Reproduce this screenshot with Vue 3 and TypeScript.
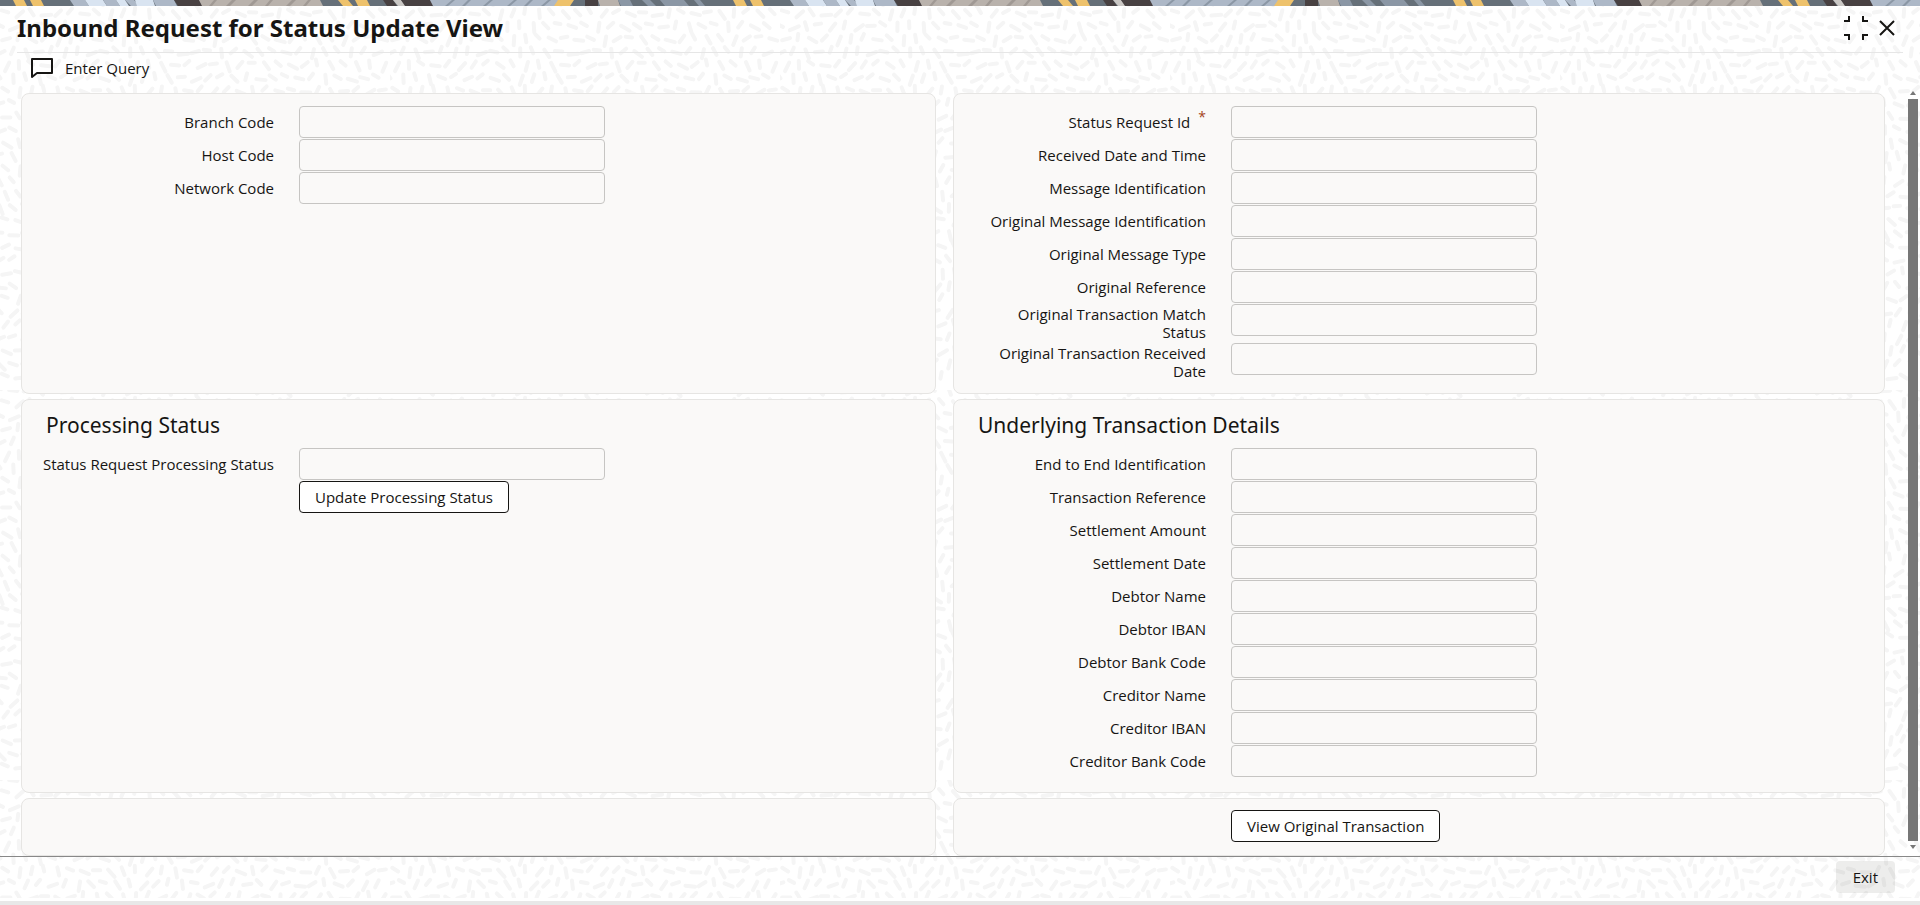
<script setup lang="ts">
interface Field {
  id: string
  label: string
  required?: boolean
}

interface Dash {
  x1: number
  y1: number
  x2: number
  y2: number
}

interface Stripe {
  points: string
  color: string
}

const generalFields: Field[] = [
  { id: 'branchCode', label: 'Branch Code' },
  { id: 'hostCode', label: 'Host Code' },
  { id: 'networkCode', label: 'Network Code' },
]

const requestFields: Field[] = [
  { id: 'statusRequestId', label: 'Status Request Id', required: true },
  { id: 'receivedDateTime', label: 'Received Date and Time' },
  { id: 'messageId', label: 'Message Identification' },
  { id: 'originalMessageId', label: 'Original Message Identification' },
  { id: 'originalMessageType', label: 'Original Message Type' },
  { id: 'originalReference', label: 'Original Reference' },
  { id: 'matchStatus', label: 'Original Transaction Match Status' },
  { id: 'originalReceivedDate', label: 'Original Transaction Received Date' },
]

const transactionFields: Field[] = [
  { id: 'endToEndId', label: 'End to End Identification' },
  { id: 'transactionReference', label: 'Transaction Reference' },
  { id: 'settlementAmount', label: 'Settlement Amount' },
  { id: 'settlementDate', label: 'Settlement Date' },
  { id: 'debtorName', label: 'Debtor Name' },
  { id: 'debtorIban', label: 'Debtor IBAN' },
  { id: 'debtorBankCode', label: 'Debtor Bank Code' },
  { id: 'creditorName', label: 'Creditor Name' },
  { id: 'creditorIban', label: 'Creditor IBAN' },
  { id: 'creditorBankCode', label: 'Creditor Bank Code' },
]

// Short strokes laid along a smooth field that repeats with the tile.
const tile = 390
function buildDashes(): Dash[] {
  const result: Dash[] = []
  const turn = (Math.PI * 2) / tile
  const rowStep = 13
  const colStep = 13
  for (let row = 0; row < tile / rowStep; row++) {
    for (let col = 0; col < tile / colStep; col++) {
      const jitter = ((row * 37 + col * 61) % 17) / 17 - 0.5
      const x = col * colStep + (row % 2) * 6 + jitter * 3
      const y = row * rowStep + jitter * 5
      const angle =
        1.5 * Math.sin(x * turn * 3 + Math.cos(y * turn) * 2) +
        1.3 * Math.cos(y * turn * 2 + Math.sin(x * turn) * 2) +
        1.3 +
        jitter * 0.6
      const half = 4 + jitter * 2
      const dx = Math.cos(angle) * half
      const dy = Math.sin(angle) * half
      result.push({ x1: x - dx, y1: y - dy, x2: x + dx, y2: y + dy })
    }
  }
  return result
}
const dashes = buildDashes()

const slate = '#667079'
const mist = '#8b97a5'
const gold = '#eec26c'
const sky = '#d9e4f1'
const steel = '#adb8c7'
const dark = '#484142'
const taupe = '#b9b2ac'
const shade = '#a09994'

function stripe(from: number, to: number, slant: number, color: string): Stripe {
  return { points: `${from},0 ${to},0 ${to + slant},6 ${from + slant},6`, color }
}
const stripes: Stripe[] = [
  stripe(13, 24, 3, gold),
  stripe(30, 41, 3, gold),
  stripe(70, 85, 4, steel),
  stripe(85, 103, 4, sky),
  stripe(103, 116, 4, steel),
  stripe(116, 125, 4, sky),
  stripe(125, 134, 6, steel),
  stripe(135, 153, 2, sky),
  stripe(153, 174, 3, steel),
  stripe(174, 199, 4, dark),
  stripe(199, 320, 3, taupe),
  stripe(214, 217, -5, shade),
  stripe(232, 236, -6, shade),
  stripe(254, 258, -6, shade),
  stripe(270, 273, -5, shade),
  stripe(292, 296, -6, shade),
  stripe(308, 311, -5, shade),
  stripe(338, 348, 5, gold),
  stripe(355, 367, 3, gold),
  stripe(383, 393, 4, dark),
  stripe(393, 401, 5, '#cbc8c5'),
  stripe(401, 430, 4, dark),
  stripe(430, 558, 3, steel),
  stripe(452, 455, -7, mist),
  stripe(468, 471, -6, mist),
  stripe(490, 493, -7, mist),
  stripe(514, 517, -7, mist),
  stripe(530, 533, -6, mist),
  stripe(548, 551, -7, mist),
  stripe(558, 574, -4, gold),
  stripe(585, 598, 0, dark),
  stripe(598, 618, 2, taupe),
  stripe(618, 630, 3, mist),
  stripe(642, 650, 6, mist),
  stripe(660, 684, 5, mist),
  stripe(694, 700, 5, mist),
]
</script>

<template>
  <div class="screen">
    <svg class="backdrop" aria-hidden="true">
      <defs>
        <pattern id="dashes" :width="tile" :height="tile" patternUnits="userSpaceOnUse">
          <line v-for="(d, i) in dashes" :key="i" :x1="d.x1" :y1="d.y1" :x2="d.x2" :y2="d.y2" />
        </pattern>
      </defs>
      <rect width="100%" height="100%" fill="url(#dashes)" />
    </svg>

    <svg class="ribbon" aria-hidden="true">
      <defs>
        <pattern id="ribbon" width="720" height="6" patternUnits="userSpaceOnUse">
          <rect width="720" height="6" :fill="slate" />
          <polygon v-for="(s, i) in stripes" :key="i" :points="s.points" :fill="s.color" />
        </pattern>
      </defs>
      <rect width="100%" height="6" fill="url(#ribbon)" />
    </svg>

    <header class="titlebar">
      <h1>Inbound Request for Status Update View</h1>
      <div class="window-actions">
        <button type="button" class="icon-button" aria-label="Restore size">
          <svg width="24" height="24" viewBox="0 0 24 24">
            <path d="M0 5H5V0M24 5H19V0M0 19H5V24M24 19H19V24" />
          </svg>
        </button>
        <button type="button" class="icon-button" aria-label="Close">
          <svg width="16" height="16" viewBox="0 0 16 16"><path d="M1 1L15 15M15 1L1 15" /></svg>
        </button>
      </div>
    </header>

    <nav class="toolbar">
      <button type="button" class="tool">
        <svg width="22" height="20" viewBox="0 0 22 20">
          <path d="M1 1H21V15H6L1 19Z" />
        </svg>
        Enter Query
      </button>
    </nav>

    <main class="content">
      <div class="panels">
        <section class="panel">
          <div v-for="f in generalFields" :key="f.id" class="row">
            <label :for="f.id">{{ f.label }}</label>
            <input :id="f.id" type="text" readonly />
          </div>
        </section>
        <section class="panel">
          <div v-for="f in requestFields" :key="f.id" class="row">
            <label :for="f.id">{{ f.label }}<sup v-if="f.required">*</sup></label>
            <input :id="f.id" type="text" readonly />
          </div>
        </section>

        <section class="panel">
          <h2>Processing Status</h2>
          <div class="row">
            <label for="processingStatus">Status Request Processing Status</label>
            <input id="processingStatus" type="text" readonly />
          </div>
          <div class="row action">
            <button type="button" class="outlined">Update Processing Status</button>
          </div>
        </section>
        <section class="panel">
          <h2>Underlying Transaction Details</h2>
          <div v-for="f in transactionFields" :key="f.id" class="row">
            <label :for="f.id">{{ f.label }}</label>
            <input :id="f.id" type="text" readonly />
          </div>
        </section>

        <section class="panel links"></section>
        <section class="panel links">
          <div class="row action">
            <button type="button" class="outlined">View Original Transaction</button>
          </div>
        </section>
      </div>
      <div class="scrollbar" aria-hidden="true">
        <svg width="6" height="4" viewBox="0 0 6 4"><path d="M0 4L3 0L6 4Z" /></svg>
        <div class="thumb"></div>
        <svg width="6" height="4" viewBox="0 0 6 4"><path d="M0 0L3 4L6 0Z" /></svg>
      </div>
    </main>

    <footer class="footer">
      <button type="button" class="exit">Exit</button>
    </footer>
    <div class="base"></div>
  </div>
</template>

<style>
body {
  margin: 0;
  background: #fff;
}
</style>

<style scoped>
.screen {
  position: relative;
  display: flex;
  flex-direction: column;
  min-height: 100vh;
  color: #161513;
  font-family: 'Open Sans', 'Noto Sans', sans-serif;
  font-size: 15px;
  line-height: 18px;
}
.screen * {
  box-sizing: border-box;
}
.backdrop {
  position: absolute;
  inset: 0;
  z-index: -1;
  width: 100%;
  height: 100%;
}
.backdrop line {
  stroke: #f5f5f5;
  stroke-width: 4;
  stroke-linecap: round;
}
.ribbon {
  display: block;
  width: 100%;
  height: 6px;
}
.titlebar {
  display: flex;
  align-items: center;
  justify-content: space-between;
  height: 47px;
  margin: 0 17px;
  padding-bottom: 3px;
  border-bottom: 1px solid #e6e6e6;
}
h1 {
  margin: 0;
  font-family: 'Noto Sans', 'Open Sans', sans-serif;
  font-size: 24px;
  line-height: 32px;
  font-weight: 700;
}
.window-actions {
  display: flex;
  align-items: center;
  gap: 11px;
  padding-right: 8px;
}
.icon-button,
.tool {
  display: flex;
  align-items: center;
  padding: 0;
  border: 0;
  background: none;
  color: inherit;
  font: inherit;
  cursor: pointer;
}
.icon-button svg,
.tool svg {
  fill: none;
  stroke: #161513;
  stroke-width: 2;
}
.tool svg {
  stroke-linejoin: round;
}
.toolbar {
  display: flex;
  height: 30px;
  margin: 0 31px;
}
.tool {
  gap: 12px;
}
.content {
  display: flex;
  flex: 1;
  padding: 10px 2px 0 21px;
}
.panels {
  display: grid;
  flex: 1;
  grid-template-columns: 915fr 932fr;
  grid-template-rows: minmax(301px, auto) minmax(394px, auto) minmax(58px, auto);
  column-gap: 17px;
  row-gap: 5px;
}
.panel {
  padding: 12px 18px 10px;
  border: 1px solid #e6e5e3;
  border-radius: 8px;
  background: #faf9f8;
}
.panel.links {
  padding-top: 11px;
}
h2 {
  margin: 0 6px 10px;
  font-family: 'Noto Sans', 'Open Sans', sans-serif;
  font-size: 21px;
  line-height: 26px;
  font-weight: 400;
}
.row {
  display: flex;
  align-items: flex-start;
  min-height: 33px;
  gap: 25px;
}
.row label {
  align-self: center;
  width: 234px;
  padding: 1px 0 2px;
  text-align: right;
}
.row input {
  width: 306px;
  height: 32px;
  border: 1px solid #c6c5c3;
  border-radius: 4px;
  background: #faf9f8;
  font: inherit;
}
sup {
  margin-left: 8px;
  color: #a4451c;
  font-size: 14px;
  line-height: 0;
}
.row.action {
  padding-left: 259px;
}
.outlined {
  height: 32px;
  padding: 0 15px 1px;
  border: 1px solid #161513;
  border-radius: 4px;
  background: #fff;
  color: inherit;
  font: inherit;
}
.scrollbar {
  display: flex;
  flex-direction: column;
  align-items: center;
  width: 10px;
  margin: -2px 0 0 23px;
  padding-bottom: 7px;
  gap: 4px;
}
.scrollbar svg {
  fill: #777;
}
.thumb {
  flex: 1;
  width: 10px;
  background: #777;
}
.footer {
  display: flex;
  align-items: center;
  justify-content: flex-end;
  height: 42px;
  padding: 0 25px 1px;
  border-top: 1px solid #888;
}
.exit {
  height: 32px;
  padding: 0 17px;
  border: 0;
  border-radius: 4px;
  background: rgba(22, 21, 19, 0.08);
  color: inherit;
  font: inherit;
}
.base {
  height: 7px;
  border-top: 3px solid #fff;
  background: #e8e8e8;
}
</style>
